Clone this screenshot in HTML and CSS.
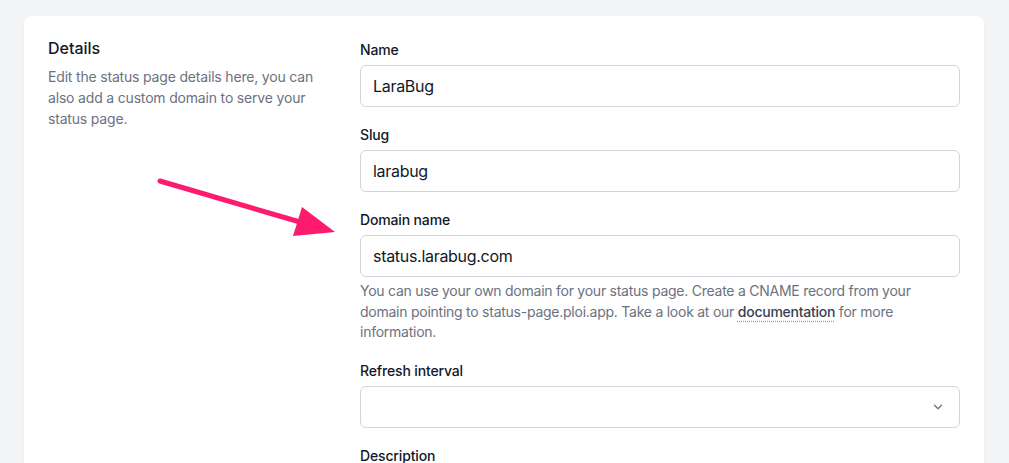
FILE: index.html
```html
<!doctype html>
<html>
<head>
    <title>Status page settings</title>
    <link rel="stylesheet" href="styles.css">
</head>
<body>
    <div class="card">
        <div class="intro">
            <h2>Details</h2>
            <p>Edit the status page details here, you can also add a custom domain to serve your status page.</p>
        </div>
        <form class="fields">
            <div class="field">
                <label for="name">Name</label>
                <input type="text" id="name" value="LaraBug">
            </div>
            <div class="field">
                <label for="slug">Slug</label>
                <input type="text" id="slug" value="larabug">
            </div>
            <div class="field">
                <label for="domain">Domain name</label>
                <input type="text" id="domain" value="status.larabug.com">
                <p class="help">You can use your own domain for your status page. Create a CNAME record from your domain pointing to status-page.ploi.app. Take a look at our <a href="#">documentation</a> for more information.</p>
            </div>
            <div class="field">
                <label for="interval">Refresh interval</label>
                <div class="select-wrap">
                    <select id="interval"><option value=""></option></select>
                    <svg class="chevron" width="14" height="14" viewBox="0 0 20 20" fill="none" stroke="#6b7280" stroke-width="1.8" stroke-linecap="round" stroke-linejoin="round"><path d="M5 7.5l5 5 5-5"/></svg>
                </div>
            </div>
            <div class="field">
                <label for="description">Description</label>
            </div>
        </form>

        <!-- annotation arrow -->
        <svg class="arrow" width="200" height="80" viewBox="0 0 200 80">
            <line x1="20" y1="21" x2="160" y2="62" stroke="#fe1a6d" stroke-width="5" stroke-linecap="round"/>
            <polygon points="162,47 195,72 153,76" fill="#fe1a6d"/>
        </svg>
    </div>
</body>
</html>
```

FILE: styles.css
```css
body {
    margin: 0;
    padding: 16px 25px 0 24px;
    background-color: #f3f4f6;
    font-family: Inter, "Liberation Sans", sans-serif;
    height: 463px;
    overflow: hidden;
}
.card {
    position: relative;
    display: grid;
    grid-template-columns: 288px 600px;
    column-gap: 24px;
    background-color: #fff;
    border-radius: 8px;
    padding: 24px 24px 40px 24px;
    box-shadow: 0 1px 3px rgba(0, 0, 0, 0.06);
}
.intro h2 {
    margin: 0;
    font-size: 16px;
    font-weight: 500;
    line-height: 16px;
    color: #111827;
}
.intro p {
    margin: 10px 0 0 0;
    font-size: 14px;
    line-height: 21px;
    letter-spacing: -0.18px;
    color: #6b7280;
}
.fields {
    display: flex;
    flex-direction: column;
    gap: 18px;
}
label {
    display: block;
    font-size: 14px;
    font-weight: 500;
    line-height: 20px;
    letter-spacing: -0.15px;
    color: #111827;
    margin-bottom: 5px;
}
input[type="text"], select {
    box-sizing: border-box;
    display: block;
    width: 100%;
    height: 42px;
    padding: 0 12px;
    border: 1px solid #d1d5db;
    border-radius: 6px;
    font-family: inherit;
    font-size: 16px;
    letter-spacing: -0.3px;
    color: #111827;
    background-color: #fff;
    outline: none;
}
.select-wrap {
    position: relative;
}
select {
    appearance: none;
}
.chevron {
    position: absolute;
    right: 15px;
    top: 14px;
}
.help {
    margin: 4px 0 0 0;
    font-size: 14px;
    line-height: 20.5px;
    letter-spacing: -0.25px;
    color: #6b7280;
}
.help a {
    color: #374151;
    font-weight: 500;
    text-decoration: underline dotted #9ca3af;
    text-underline-offset: 4px;
}
.arrow {
    position: absolute;
    left: 116px;
    top: 144px;
}
```
